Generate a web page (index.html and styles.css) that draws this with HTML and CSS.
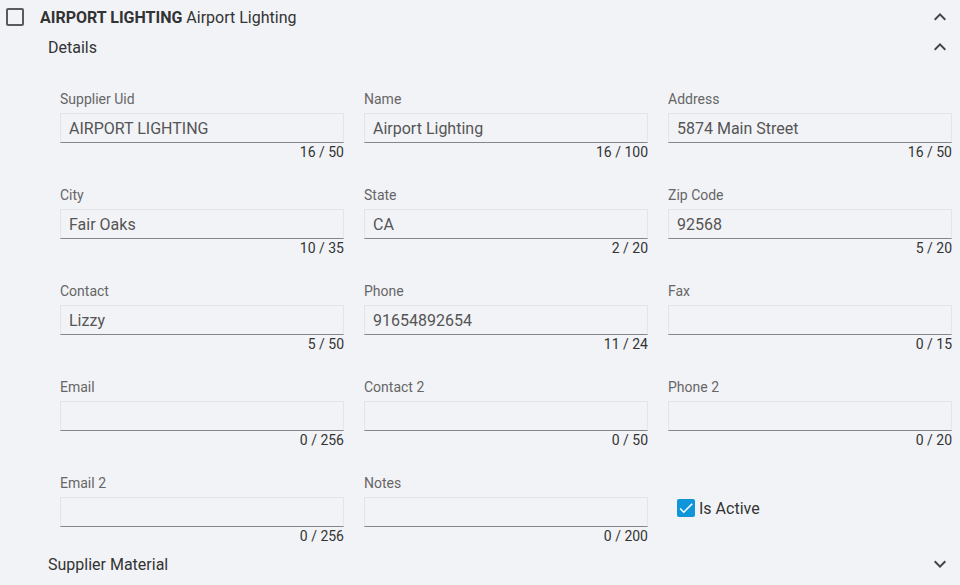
FILE: index.html
```html
<!DOCTYPE html>
<html lang="en">

<head>
    <meta charset="UTF-8">
    <meta name="viewport" content="width=device-width, initial-scale=1.0">
    <title>Supplier</title>
    <link rel="stylesheet" href="styles.css">
</head>

<body>
    <div class="panel">
        <div class="panel-header">
            <span class="box"></span>
            <span class="title"><strong>AIRPORT LIGHTING</strong> Airport Lighting</span>
            <svg class="chevron" viewBox="0 0 24 24"><path d="M7.41 15.41L12 10.83l4.59 4.58L18 14l-6-6-6 6z"/></svg>
        </div>

        <div class="section-header">
            <span>Details</span>
            <svg class="chevron" viewBox="0 0 24 24"><path d="M7.41 15.41L12 10.83l4.59 4.58L18 14l-6-6-6 6z"/></svg>
        </div>

        <div class="fields">
            <div class="field">
                <label>Supplier Uid</label>
                <div class="input">AIRPORT LIGHTING</div>
                <div class="counter">16 / 50</div>
            </div>
            <div class="field">
                <label>Name</label>
                <div class="input">Airport Lighting</div>
                <div class="counter">16 / 100</div>
            </div>
            <div class="field">
                <label>Address</label>
                <div class="input">5874 Main Street</div>
                <div class="counter">16 / 50</div>
            </div>

            <div class="field">
                <label>City</label>
                <div class="input">Fair Oaks</div>
                <div class="counter">10 / 35</div>
            </div>
            <div class="field">
                <label>State</label>
                <div class="input">CA</div>
                <div class="counter">2 / 20</div>
            </div>
            <div class="field">
                <label>Zip Code</label>
                <div class="input">92568</div>
                <div class="counter">5 / 20</div>
            </div>

            <div class="field">
                <label>Contact</label>
                <div class="input">Lizzy</div>
                <div class="counter">5 / 50</div>
            </div>
            <div class="field">
                <label>Phone</label>
                <div class="input">91654892654</div>
                <div class="counter">11 / 24</div>
            </div>
            <div class="field">
                <label>Fax</label>
                <div class="input"></div>
                <div class="counter">0 / 15</div>
            </div>

            <div class="field">
                <label>Email</label>
                <div class="input"></div>
                <div class="counter">0 / 256</div>
            </div>
            <div class="field">
                <label>Contact 2</label>
                <div class="input"></div>
                <div class="counter">0 / 50</div>
            </div>
            <div class="field">
                <label>Phone 2</label>
                <div class="input"></div>
                <div class="counter">0 / 20</div>
            </div>

            <div class="field">
                <label>Email 2</label>
                <div class="input"></div>
                <div class="counter">0 / 256</div>
            </div>
            <div class="field">
                <label>Notes</label>
                <div class="input"></div>
                <div class="counter">0 / 200</div>
            </div>
            <div class="field check-field">
                <span class="checked">
                    <svg viewBox="0 0 24 24"><path d="M9 16.17L4.83 12l-1.42 1.41L9 19 21 7l-1.41-1.41z"/></svg>
                </span>
                <span>Is Active</span>
            </div>
        </div>

        <div class="section-header">
            <span>Supplier Material</span>
            <svg class="chevron down" viewBox="0 0 24 24"><path d="M7.41 15.41L12 10.83l4.59 4.58L18 14l-6-6-6 6z"/></svg>
        </div>
    </div>
</body>

</html>
```

FILE: styles.css
```css
body {
    margin: 0;
    background-color: #f2f3f7;
    font-family: Roboto, "Liberation Sans", sans-serif;
    color: #333;
}

.panel {
    height: 585px;
    overflow: hidden;
}

.panel-header {
    display: flex;
    align-items: center;
    height: 34px;
    padding: 0 8px 0 6px;
}

.box {
    width: 14px;
    height: 14px;
    border: 2px solid #5a5a5e;
    border-radius: 2px;
    margin-right: 16px;
}

.title {
    flex: 1;
    font-size: 16px;
    color: #333;
}

.title strong {
    font-weight: 700;
}

.chevron {
    width: 24px;
    height: 24px;
    fill: #444;
}

.chevron.down {
    transform: rotate(180deg);
}

.section-header {
    display: flex;
    align-items: center;
    justify-content: space-between;
    height: 26px;
    padding: 0 8px 0 48px;
    font-size: 16px;
    color: #333;
}

.fields {
    display: grid;
    grid-template-columns: repeat(3, 1fr);
    column-gap: 20px;
    row-gap: 27px;
    padding: 31px 8px 7px 60px;
}

.field label {
    display: block;
    font-size: 14px;
    line-height: 16px;
    color: #666;
    margin-bottom: 6px;
}

.input {
    height: 30px;
    box-sizing: border-box;
    padding: 0 8px;
    border: 1px solid #e4e5ea;
    border-bottom-color: #85858c;
    font-size: 16px;
    line-height: 29px;
    color: #555;
}

.counter {
    text-align: right;
    font-size: 14px;
    line-height: 16px;
    margin-top: 1px;
    color: #333;
}

.check-field {
    display: flex;
    align-items: center;
    padding: 22px 0 0 9px;
    height: 22px;
    font-size: 16px;
    color: #333;
}

.checked {
    width: 18px;
    height: 18px;
    border-radius: 2px;
    background-color: #0f95d9;
    margin-right: 4px;
    display: flex;
    align-items: center;
    justify-content: center;
}

.checked svg {
    width: 18px;
    height: 18px;
    fill: #fff;
}
```
